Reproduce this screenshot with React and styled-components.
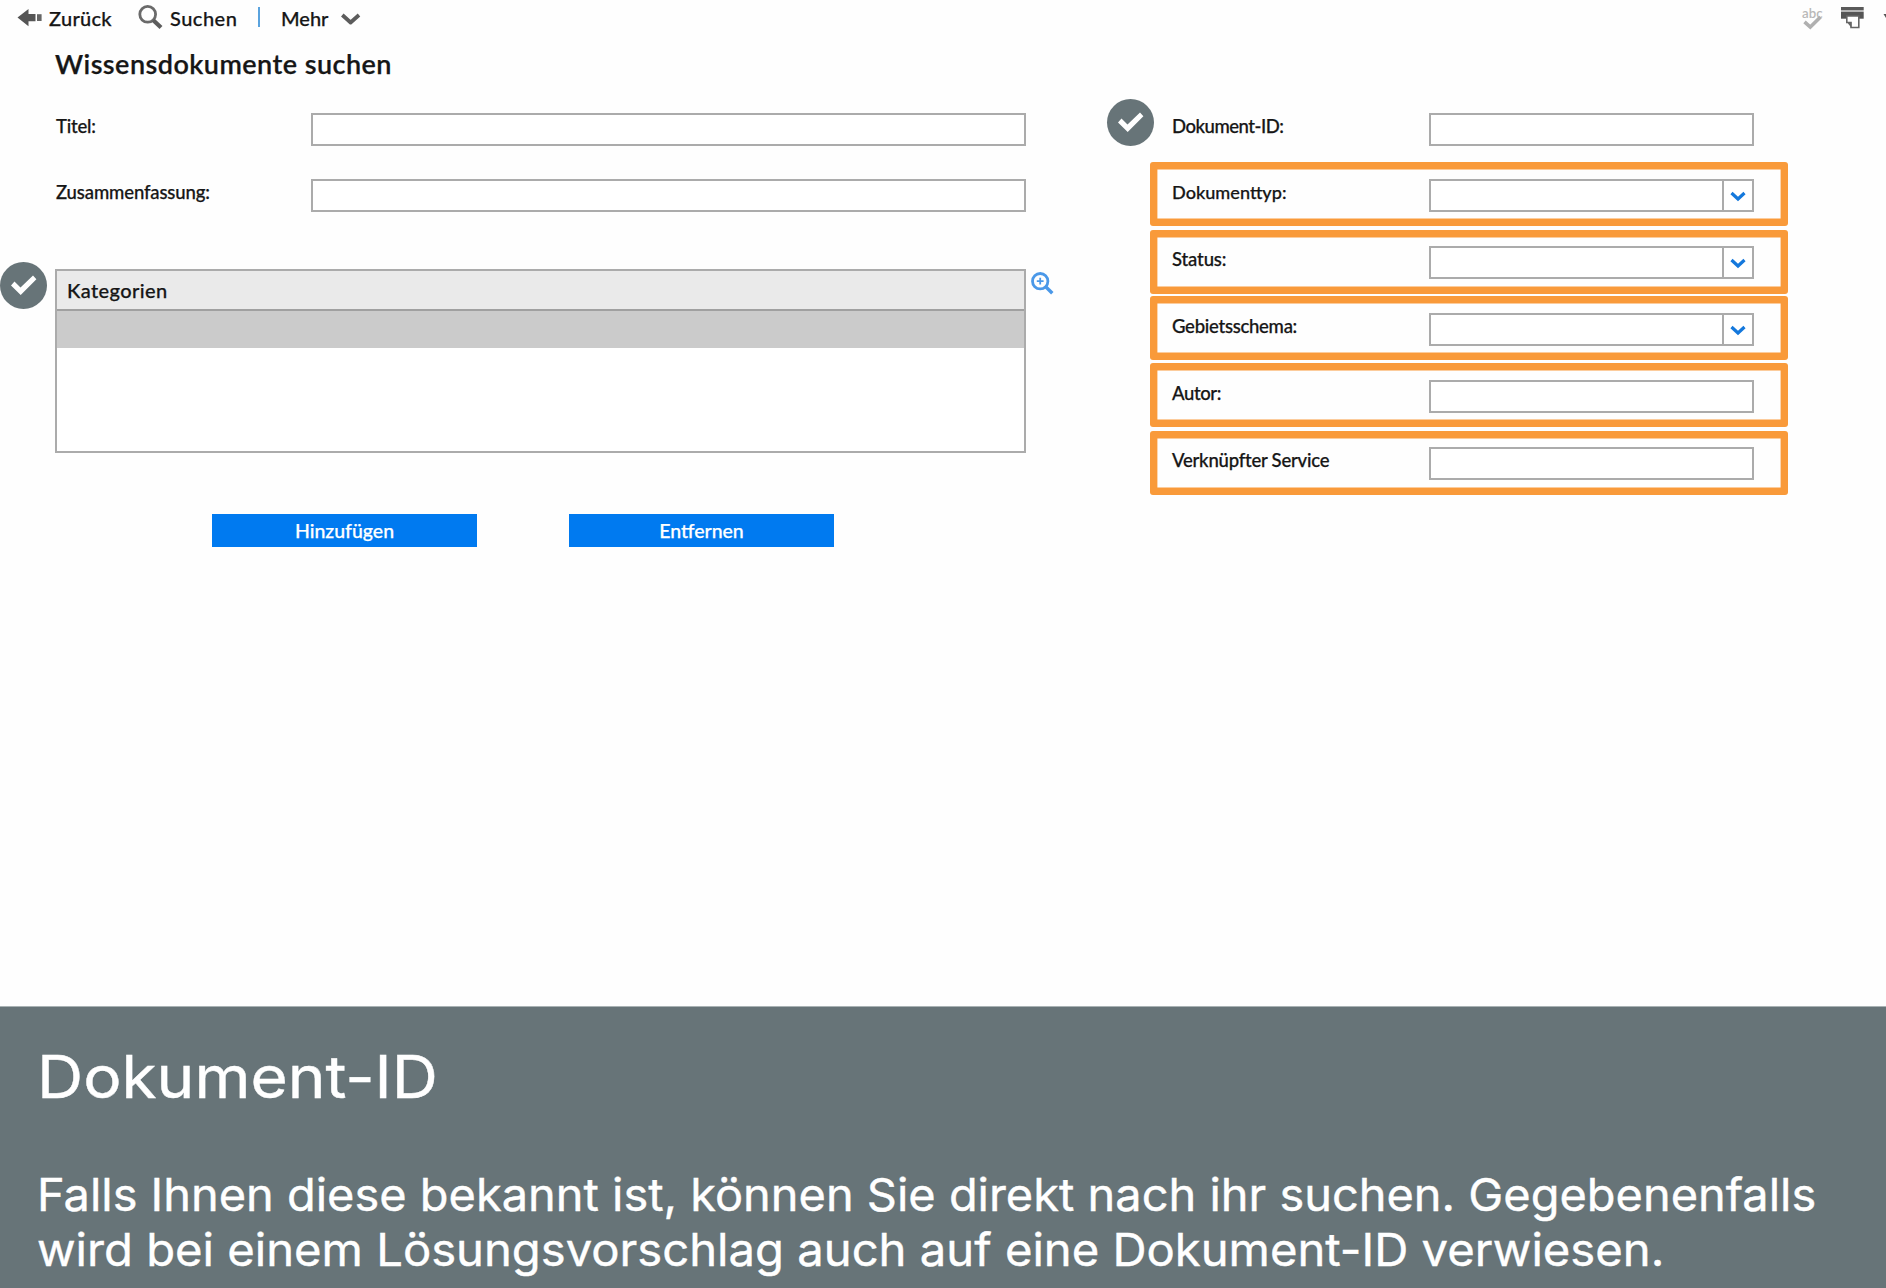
import React from "react";
import styled, { createGlobalStyle } from "styled-components";

const GlobalStyle = createGlobalStyle`
  * { box-sizing: border-box; }
  body { margin: 0; background: #fefefe; }
`;

const slate = "#677478";
const line = "#ababab";
const accent = "#f99a3a";

const Page = styled.div`
  width: 1886px;
  height: 1288px;
  display: flex;
  flex-direction: column;
  overflow: hidden;
  background: #fefefe;
  color: #161616;
  font-family: Lato, "Open Sans", sans-serif;
  font-weight: 500;
  -webkit-text-stroke: 0.25px currentColor;
`;

const Toolbar = styled.header`
  display: flex;
  align-items: flex-start;
  height: 38px;
  padding-left: 17px;
`;

const ToolItem = styled.button`
  display: flex;
  align-items: flex-start;
  height: 38px;
  margin: 0 0 0 ${(p) => p.$before || 0}px;
  padding: 0;
  border: 0;
  background: none;
  color: inherit;
  font: inherit;
`;

const ToolLabel = styled.span`
  width: ${(p) => p.$width}px;
  font-size: 20px;
  line-height: 37px;
  letter-spacing: ${(p) => p.$track || 0}px;
  text-align: left;
  white-space: nowrap;
`;

const Icon = styled.svg`
  display: block;
  flex: none;
`;

const Divider = styled.span`
  width: 2px;
  height: 20px;
  margin: 7px 0 0 21px;
  background: #5aa3de;
`;

const ToolbarRight = styled.div`
  display: flex;
  margin-left: auto;
`;

const AbcText = styled.text`
  font: 600 14px Lato, sans-serif;
`;

const Title = styled.h1`
  margin: 0 0 23px;
  padding-left: 55px;
  font-size: 27px;
  font-weight: 600;
  line-height: 52px;
  letter-spacing: 0.45px;
`;

const Columns = styled.main`
  display: grid;
  grid-template-columns: 1150px 638px;
  flex: 1;
`;

const LeftColumn = styled.section`
  padding-left: 56px;
`;

const FieldRow = styled.div`
  display: flex;
  align-items: flex-start;
  margin-bottom: ${(p) => p.$after}px;
`;

const Label = styled.label`
  flex: none;
  width: ${(p) => p.$width}px;
  font-size: ${(p) => p.$size || 18.5}px;
  line-height: 26px;
  letter-spacing: ${(p) => (p.$track ? `${p.$track}px` : "normal")};
  white-space: nowrap;
`;

const Input = styled.div`
  display: flex;
  justify-content: flex-end;
  width: ${(p) => p.$width}px;
  height: 33px;
  border: 2px solid ${line};
  background: #fff;
`;

const DropButton = styled.span`
  display: flex;
  justify-content: center;
  align-items: center;
  width: 30px;
  border-left: 2px solid ${line};
`;

const CategoryArea = styled.div`
  position: relative;
  display: flex;
  align-items: flex-start;
  gap: 5px;
`;

const Table = styled.div`
  width: 971px;
  height: 184px;
  margin-left: -1px;
  border: 2px solid ${line};
  background: #fff;
`;

const TableHead = styled.div`
  height: 40px;
  padding-left: 10px;
  border-bottom: 2px solid #a0a0a0;
  background: #eaeaea;
  font-size: 20px;
  line-height: 38px;
  letter-spacing: 0.4px;
`;

const SelectedRow = styled.div`
  height: 37px;
  background: #cbcbcb;
`;

const LookupIcon = styled(Icon)`
  margin-top: 3px;
`;

const Actions = styled.div`
  display: flex;
  gap: 92px;
  margin-top: 61px;
  padding-left: 156px;
`;

const ActionButton = styled.button`
  width: 265px;
  height: 33px;
  padding: 0;
  border: 0;
  background: #007af0;
  color: #fff;
  font: 500 19.5px/33px Lato, sans-serif;
`;

const RightColumn = styled.section`
  display: flex;
  flex-direction: column;
`;

const PlainRow = styled.div`
  position: relative;
  display: flex;
  align-items: flex-start;
  height: 33px;
  padding-left: 22px;
`;

const HighlightRow = styled.div`
  display: flex;
  align-items: flex-start;
  height: 64px;
  margin-top: ${(p) => p.$before}px;
  padding: ${(p) => p.$inset}px 0 0 22px;
  border-radius: 3px;
  box-shadow: inset 0 0 0 7.4px ${accent};
`;

const Badge = styled.span`
  position: absolute;
  left: ${(p) => p.$left}px;
  top: ${(p) => p.$top}px;
  width: 47px;
  height: 47px;
  border-radius: 50%;
  background: ${slate};
`;

const InfoPanel = styled.footer`
  height: 282px;
  padding: 34px 0 0 37px;
  border-top: 1px solid #a9b2b4;
  background: ${slate};
  color: #fff;
  font-family: Inter, sans-serif;
  font-weight: 400;
  -webkit-text-stroke: 0.4px currentColor;
`;

const InfoTitle = styled.h2`
  margin: 0 0 54px;
  font-size: 59px;
  font-weight: 400;
  line-height: 72px;
  transform: scaleX(1.084);
  transform-origin: left;
`;

const InfoText = styled.p`
  margin: 0;
  font-size: 45.5px;
  line-height: 55px;
`;

const InfoLine = styled.span`
  display: block;
  transform: scaleX(${(p) => p.$stretch});
  transform-origin: left;
  white-space: nowrap;
`;

const CheckBadge = ({ left, top }) => (
  <Badge $left={left} $top={top}>
    <Icon width="47" height="47" viewBox="0 0 47 47">
      <path d="M11 23.4 14.5 19.5 20.5 25.4 33 13.5 36.4 17.2 20.7 33Z" fill="#fff" />
    </Icon>
  </Badge>
);

const Dropdown = () => (
  <DropButton>
    <Icon width="16" height="12" viewBox="0 0 16 12">
      <path d="M1.5 3 8 9 14.5 3" fill="none" stroke="#1478dc" strokeWidth="3.2" />
    </Icon>
  </DropButton>
);

const highlighted = [
  { label: "Dokumenttyp:", size: 18.1, before: 16, inset: 17, select: true },
  { label: "Status:", track: -0.13, before: 4, inset: 16, select: true },
  { label: "Gebietsschema:", track: -0.27, before: 2, inset: 17, select: true },
  { label: "Autor:", track: -0.4, before: 3, inset: 17 },
  { label: "Verknüpfter Service", track: -0.22, before: 4, inset: 16 },
];

export default function App() {
  return (
    <Page>
      <GlobalStyle />
      <Toolbar>
        <ToolItem>
          <Icon width="32" height="38" viewBox="17 0 32 38">
            <path d="M17.5 17.6 28.5 9V14H35.5V21.3H28.5V26.3Z" fill="#555" />
            <path d="M37 14.2H41.6V21H37Z" fill="#666" />
          </Icon>
          <ToolLabel $width={63} $track={0.3}>Zurück</ToolLabel>
        </ToolItem>
        <ToolItem $before={25}>
          <Icon width="33" height="38" viewBox="137 0 33 38">
            <circle cx="147.7" cy="14.3" r="7.9" fill="none" stroke="#6a6a6a" strokeWidth="2.8" />
            <path d="M153.3 20.3 161 27.6" stroke="#5c5c5c" strokeWidth="4.2" />
          </Icon>
          <ToolLabel $width={67} $track={0.5}>Suchen</ToolLabel>
        </ToolItem>
        <Divider />
        <ToolItem $before={21}>
          <ToolLabel $width={59}>Mehr</ToolLabel>
          <Icon width="22" height="38" viewBox="340 0 22 38">
            <path d="M342.3 15 350.6 22.5 359 15" fill="none" stroke="#5c5c5c" strokeWidth="3.8" strokeLinejoin="round" />
          </Icon>
        </ToolItem>
        <ToolbarRight>
          <ToolItem>
            <Icon width="40" height="38" viewBox="1800 0 40 38">
              <AbcText x="1802" y="18" fill="#b8b8b8" textLength="20.5" lengthAdjust="spacingAndGlyphs">abc</AbcText>
              <path d="M1804.5 21.8 1810.3 27 1820.5 17" fill="none" stroke="#b0b0b0" strokeWidth="3.6" />
            </Icon>
          </ToolItem>
          <ToolItem>
            <Icon width="46" height="38" viewBox="1840 0 46 38">
              <path d="M1841 7H1863.7V10H1841Z" fill="#5a5a5a" />
              <path d="M1841 10H1863.7V12H1841Z" fill="#b5b5b5" />
              <path d="M1841 12H1863.7V18.7H1841Z" fill="#555" />
              <path d="M1846.8 16V22.5H1851V27.5H1858.8V16Z" fill="#fff" stroke="#666" strokeWidth="1.6" />
              <path d="M1847 22.3H1851.2V27.5Z" fill="#666" />
              <path d="M1883.5 14H1886V18Z" fill="#555" />
            </Icon>
          </ToolItem>
        </ToolbarRight>
      </Toolbar>
      <Title>Wissensdokumente suchen</Title>
      <Columns>
        <LeftColumn>
          <FieldRow $after={33}>
            <Label $width={255} $track={-0.2}>Titel:</Label>
            <Input $width={715} />
          </FieldRow>
          <FieldRow $after={57}>
            <Label $width={255} $track={-0.12}>Zusammenfassung:</Label>
            <Input $width={715} />
          </FieldRow>
          <CategoryArea>
            <CheckBadge left={-56} top={-7} />
            <Table>
              <TableHead>Kategorien</TableHead>
              <SelectedRow />
            </Table>
            <LookupIcon width="23" height="23" viewBox="0 0 23 23" fill="none" stroke="#4a98e8">
              <circle cx="9.2" cy="9.2" r="7.7" strokeWidth="2.8" />
              <path d="M9.2 5.8V12.6M5.8 9.2H12.6" strokeWidth="1.8" />
              <path d="M15 15 21.3 21.3" strokeWidth="3.4" />
            </LookupIcon>
          </CategoryArea>
          <Actions>
            <ActionButton>Hinzufügen</ActionButton>
            <ActionButton>Entfernen</ActionButton>
          </Actions>
        </LeftColumn>
        <RightColumn>
          <PlainRow>
            <CheckBadge left={-43} top={-14} />
            <Label $width={257} $track={-0.48}>Dokument-ID:</Label>
            <Input $width={325} />
          </PlainRow>
          {highlighted.map((row) => (
            <HighlightRow key={row.label} $before={row.before} $inset={row.inset}>
              <Label $width={257} $track={row.track} $size={row.size}>{row.label}</Label>
              <Input $width={325}>{row.select && <Dropdown />}</Input>
            </HighlightRow>
          ))}
        </RightColumn>
      </Columns>
      <InfoPanel>
        <InfoTitle>Dokument-ID</InfoTitle>
        <InfoText>
          <InfoLine $stretch={1.0315}>Falls Ihnen diese bekannt ist, können Sie direkt nach ihr suchen. Gegebenenfalls</InfoLine>
          <InfoLine $stretch={1.037}>wird bei einem Lösungsvorschlag auch auf eine Dokument-ID verwiesen.</InfoLine>
        </InfoText>
      </InfoPanel>
    </Page>
  );
}
